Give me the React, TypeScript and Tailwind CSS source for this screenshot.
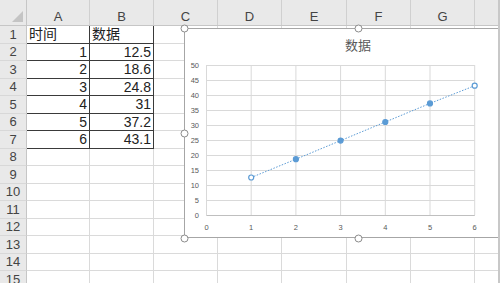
import React from 'react';

const cols = [
  { name: 'A', w: 'w-[63px]' },
  { name: 'B', w: 'w-[64px]' },
  { name: 'C', w: 'w-[64px]' },
  { name: 'D', w: 'w-[64px]' },
  { name: 'E', w: 'w-[65px]' },
  { name: 'F', w: 'w-[64px]' },
  { name: 'G', w: 'w-[64px]' },
  { name: '', w: 'w-[64px]' },
];

const data: [string, string][] = [
  ['时间', '数据'],
  ['1', '12.5'],
  ['2', '18.6'],
  ['3', '24.8'],
  ['4', '31'],
  ['5', '37.2'],
  ['6', '43.1'],
];

const points = [12.5, 18.6, 24.8, 31, 37.2, 43.1];

const font = { fontFamily: '"Liberation Sans", "Noto Sans CJK SC", sans-serif' };

const Chart: React.FC = () => {
  const x0 = 22.5;
  const ux = 44.7;
  const y0 = 187;
  const uy = 3;
  const px = (v: number) => x0 + v * ux;
  const py = (v: number) => y0 - v * uy;
  const line = points.map((v, i) => `${px(i + 1)},${py(v)}`).join(' ');

  return (
    <div className="absolute left-[184px] top-[28px] w-[348px] h-[210px] bg-white border border-[#a6a6a6]">
      <svg width="348" height="210" className="absolute left-[-1px] top-[-1px] overflow-visible" style={font}>
        <text x="174" y="22" textAnchor="middle" fontSize="13" fill="#595959">数据</text>
        {Array.from({ length: 11 }).map((_, i) => (
          <g key={i}>
            <line x1={x0} x2={px(6)} y1={py(i * 5) + 0.5} y2={py(i * 5) + 0.5} stroke="#d9d9d9" strokeWidth="1" />
            <text x="15" y={py(i * 5) + 3} textAnchor="end" fontSize="7.5" fill="#595959">{i * 5}</text>
          </g>
        ))}
        {Array.from({ length: 7 }).map((_, i) => (
          <g key={i}>
            <line x1={px(i)} x2={px(i)} y1={py(50)} y2={y0} stroke="#d9d9d9" strokeWidth="1" />
            <text x={px(i)} y="202" textAnchor="middle" fontSize="7.5" fill="#595959">{i}</text>
          </g>
        ))}
        <line x1={x0} x2={px(6)} y1={y0 + 0.5} y2={y0 + 0.5} stroke="#bfbfbf" strokeWidth="1" />
        <polyline points={line} fill="none" stroke="#5b9bd5" strokeWidth="1" strokeDasharray="1.5 1.5" />
        {points.map((v, i) => {
          const hollow = i === 0 || i === points.length - 1;
          return (
            <circle
              key={i}
              cx={px(i + 1)}
              cy={py(v)}
              r="2.5"
              fill={hollow ? '#ffffff' : '#5b9bd5'}
              stroke="#5b9bd5"
              strokeWidth="1.2"
            />
          );
        })}
        {[
          [0, 0],
          [174, 0],
          [0, 105],
          [0, 210],
          [174, 210],
        ].map(([cx, cy], i) => (
          <circle key={i} cx={cx + 0.5} cy={cy + 0.5} r="3.5" fill="#ffffff" stroke="#8c8c8c" strokeWidth="1" />
        ))}
      </svg>
    </div>
  );
};

export default function App() {
  return (
    <div className="relative w-[500px] h-[283px] overflow-hidden bg-white text-[#222]" style={font}>
      {/* column header */}
      <div className="flex h-[26px] bg-[#e9e9e9] border-b border-[#c6c6c6]">
        <div className="relative w-[27px] shrink-0 border-r border-[#c6c6c6]">
          <div className="absolute right-[3px] bottom-[3px] w-0 h-0 border-l-[11px] border-l-transparent border-b-[11px] border-b-[#c4c4c4]" />
        </div>
        {cols.map((c, i) => (
          <div
            key={i}
            className={`${c.w} shrink-0 flex items-center justify-center pt-[8px] text-[13px] text-[#444] border-r border-[#d0d0d0]`}
          >
            {c.name}
          </div>
        ))}
      </div>

      {/* rows */}
      {Array.from({ length: 15 }).map((_, r) => {
        const row = data[r];
        return (
          <div key={r} className="flex h-[17.5px]">
            <div className="w-[27px] shrink-0 bg-[#e9e9e9] border-r border-[#c6c6c6] border-b border-b-[#d8d8d8] flex items-center justify-center text-[13px] text-[#444] leading-none">
              {r + 1}
            </div>
            {cols.map((c, ci) => {
              const inTable = row && ci < 2;
              const text = inTable ? row[ci] : '';
              const isHeader = r === 0;
              return (
                <div
                  key={ci}
                  className={`${c.w} shrink-0 flex items-center px-[2px] text-[14px] leading-none ${
                    inTable ? 'border-r border-b border-[#3a3a3a]' : 'border-r border-b border-[#dadada]'
                  } ${isHeader ? 'justify-start' : 'justify-end'}`}
                >
                  {text}
                </div>
              );
            })}
          </div>
        );
      })}

      <Chart />

      <div className="absolute right-0 top-0 w-[2px] h-full bg-[#c8c8c8]" />
    </div>
  );
}
